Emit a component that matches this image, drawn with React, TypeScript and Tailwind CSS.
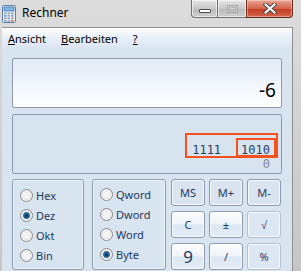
import React from "react";

function CalcIcon() {
  return (
    <svg width="14" height="18" viewBox="0 0 14 18">
      <rect x="0.5" y="0.5" width="13" height="17" rx="1" fill="#eef3f8" stroke="#5d7ea8" />
      <rect x="2" y="2" width="10" height="4" fill="#7db3e6" stroke="#4a78a8" strokeWidth="0.8" />
      {[0, 1, 2, 3].map((r) =>
        [0, 1, 2].map((c) => (
          <rect key={`${r}-${c}`} x={2 + c * 3.5} y={7.5 + r * 2.5} width="2.6" height="1.7" fill={c === 2 && r === 3 ? "#e06a3c" : "#8aa2bf"} />
        ))
      )}
    </svg>
  );
}

function Radio({ label, checked }: { label: string; checked?: boolean }) {
  return (
    <div className="flex items-center h-[13px] gap-[3px]">
      <span className="w-[13px] h-[13px] rounded-full border border-[#8a8a8a] bg-[radial-gradient(circle_at_50%_50%,#f4f4f4_35%,#c9c9c9_95%)] shadow-[inset_0_0_0_1px_rgba(255,255,255,0.8)] flex items-center justify-center shrink-0">
        {checked && (
          <span className="w-[7px] h-[7px] rounded-full border border-[#153f6a] bg-[radial-gradient(circle_at_50%_55%,#0b355f_25%,#2f8fd4_75%,#7cc8f2)]" />
        )}
      </span>
      <span className="text-[11px] leading-[13px] text-[#1e395b]">{label}</span>
    </div>
  );
}

function Btn({
  label,
  kind,
  big,
}: {
  label: string;
  kind: "flat" | "grad" | "light";
  big?: boolean;
}) {
  const base =
    "w-[34px] h-[27px] rounded-[3px] flex items-center justify-center leading-none shadow-[inset_0_0_0_1px_rgba(255,255,255,0.7)]";
  const styles = {
    flat: "border border-[#8d9bb0] bg-[#dae4f1] text-[#1e395b]",
    grad: "border border-[#8d9bb0] bg-[linear-gradient(to_bottom,#fbfcfe_0%,#eef3f9_48%,#dde7f3_52%,#e3ebf6_100%)] text-[#1e395b]",
    light: "border border-[#b4c0d0] bg-[#dde7f3] text-[#1e395b]",
  }[kind];
  return (
    <div className={`${base} ${styles} ${big ? "text-[17px]" : "text-[11px]"}`}>{label}</div>
  );
}

export default function App() {
  return (
    <div className="w-[301px] h-[271px] overflow-hidden flex flex-col bg-[linear-gradient(to_bottom,#dcdcdc,#c6c6c6)] font-['Noto_Sans',sans-serif]">
      {/* title bar */}
      <div className="h-[27px] flex items-start shrink-0">
        <div className="ml-[2px] mt-[5px]">
          <CalcIcon />
        </div>
        <span className="ml-[6px] mt-[5px] text-[12px] leading-[15px] text-black">Rechner</span>
        <div className="ml-auto mr-[8px] flex h-[18px]">
          <div className="w-[27px] h-[18px] border border-t-0 border-[#6f6f6f] rounded-bl-[4px] bg-[linear-gradient(to_bottom,#e6e6e6,#c9c9c9_50%,#b9b9b9_51%,#cfcfcf)] shadow-[inset_0_0_0_1px_rgba(255,255,255,0.6)] flex items-end justify-center pb-[4px]">
            <div className="w-[12px] h-[4px] bg-white border border-[#4b4b4b] rounded-[1px]" />
          </div>
          <div className="w-[28px] h-[18px] border-b border-[#6f6f6f] bg-[linear-gradient(to_bottom,#e6e6e6,#c9c9c9_50%,#b9b9b9_51%,#cfcfcf)] shadow-[inset_0_0_0_1px_rgba(255,255,255,0.6)] flex items-center justify-center">
            <div className="w-[11px] h-[8px] border border-[#a9a9a9] flex items-center justify-center">
              <div className="w-[7px] h-[3px] border border-[#b0b0b0] bg-[#d8d8d8]" />
            </div>
          </div>
          <div className="w-[47px] h-[18px] border border-t-0 border-[#6b2a1e] rounded-br-[4px] bg-[linear-gradient(to_bottom,#e8a593,#d4634a_50%,#c23b22_51%,#d4654a)] shadow-[inset_0_0_0_1px_rgba(255,255,255,0.35)] flex items-center justify-center">
            <svg width="14" height="11" viewBox="0 0 14 11">
              <path d="M2.5 1.5 L11.5 9.5 M11.5 1.5 L2.5 9.5" stroke="#4a4a4a" strokeWidth="4" strokeLinecap="square" />
              <path d="M2.5 1.5 L11.5 9.5 M11.5 1.5 L2.5 9.5" stroke="#ffffff" strokeWidth="2" strokeLinecap="square" />
            </svg>
          </div>
        </div>
      </div>

      {/* client area */}
      <div className="flex-1 ml-[2px] mr-[8px] flex flex-col border-t border-r border-[#8f8f8f] bg-[#d9e4f1]">
        {/* menu bar */}
        <div className="h-[20px] shrink-0 flex items-center gap-[15px] pl-[6px] bg-[linear-gradient(to_bottom,#fcfdfe,#e9eff8_50%,#dbe5f2)] text-[11px] text-black leading-none">
          <span>
            <span className="underline">A</span>nsicht
          </span>
          <span>
            <span className="underline">B</span>earbeiten
          </span>
          <span className="underline">?</span>
        </div>

        {/* body */}
        <div className="flex flex-col pl-[10px] pt-[10px]">
          {/* primary display */}
          <div className="w-[270px] h-[50px] rounded-[2px] border border-[#8b99ad] bg-[linear-gradient(to_bottom,#e2ebf7,#f4f7fc_60%,#ffffff)] flex items-end justify-end pr-[5px] pb-[6px]">
            <span className="text-[19px] leading-[22px] text-black">-6</span>
          </div>

          {/* binary display */}
          <div className="relative mt-[6px] w-[270px] h-[60px] rounded-[2px] border border-[#8b99ad] bg-[#d8e3f0] flex flex-col items-end pr-[11px] pt-[28px] font-['DejaVu_Sans_Mono',monospace]">
            <div className="flex gap-[20px] text-[12px] leading-[14px] text-[#2b3f5c]">
              <span>1111</span>
              <span>1010</span>
            </div>
            <span className="text-[12px] leading-[12px] text-[#7d8794] mt-[1px]">0</span>
            <div className="absolute left-[172px] top-[18px] w-[93px] h-[25px] border-2 border-[#f4511e]" />
            <div className="absolute left-[223px] top-[23px] w-[40px] h-[19px] border-2 border-[#f4511e]" />
          </div>

          {/* bottom area */}
          <div className="mt-[5px] flex">
            <div className="w-[72px] h-[91px] rounded-[3px] border border-[#8e9cb1] shadow-[inset_0_0_0_1px_rgba(255,255,255,0.5)] flex flex-col gap-[7px] pl-[7px] pt-[9px]">
              <Radio label="Hex" />
              <Radio label="Dez" checked />
              <Radio label="Okt" />
              <Radio label="Bin" />
            </div>
            <div className="ml-[8px] w-[74px] h-[91px] rounded-[3px] border border-[#8e9cb1] shadow-[inset_0_0_0_1px_rgba(255,255,255,0.5)] flex flex-col gap-[7px] pl-[7px] pt-[8px]">
              <Radio label="Qword" />
              <Radio label="Dword" />
              <Radio label="Word" />
              <Radio label="Byte" checked />
            </div>
            <div className="ml-[5px] grid grid-cols-[34px_34px_34px] gap-x-[4px] gap-y-[5px]">
              <Btn label="MS" kind="flat" />
              <Btn label="M+" kind="flat" />
              <Btn label="M-" kind="flat" />
              <Btn label="C" kind="grad" />
              <Btn label="±" kind="grad" />
              <Btn label="√" kind="light" />
              <Btn label="9" kind="grad" big />
              <Btn label="/" kind="grad" />
              <Btn label="%" kind="light" />
            </div>
          </div>
        </div>
      </div>
    </div>
  );
}
